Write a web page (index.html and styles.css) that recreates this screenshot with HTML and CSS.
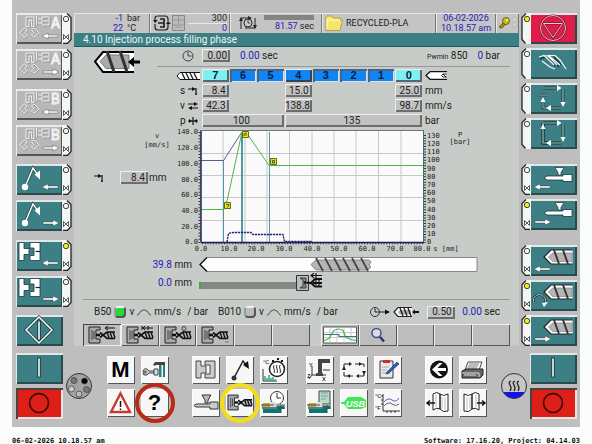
FILE: index.html
```html
<!DOCTYPE html>
<html lang="en">
<head>
<meta charset="utf-8">
<title>4.10 Injection process filling phase</title>
<link rel="stylesheet" href="styles.css">
</head>
<body>
<svg class="defs" aria-hidden="true">
  <symbol id="tab" viewBox="0 0 10 31"><path d="M0 0H6L9 4V27L6 31H0Z" fill="#f4f6f4"/><path d="M5 .5L9 4.5V26.500L5.500 30.500H1" fill="none" stroke="#222" stroke-width="1.300"/><circle class="lamp" cx="4" cy="6" r="2.700" stroke="#333" stroke-width=".9"/><path d="M1.500 21.500l5 5v-5l-5 5z" fill="none" stroke="#333" stroke-width=".8"/></symbol>
  <symbol id="tab-plain" viewBox="0 0 10 31"><path d="M0 0H6L9 4V27L6 31H0Z" fill="#f4f6f4"/><path d="M5 .5L9 4.500V26.500L5.500 30.500" fill="none" stroke="#222" stroke-width="1.300"/><circle class="lamp" cx="4" cy="6" r="2.700" stroke="#333" stroke-width=".9"/></symbol>
  <symbol id="arrow-l" viewBox="0 0 17 8"><path d="M0 4L6 1V3H16V5H6V7Z" fill="#fff" stroke="#333" stroke-width=".4"/></symbol>
  <symbol id="arrow-r" viewBox="0 0 17 8"><path d="M17 4L11 1V3H1V5H11V7Z" fill="#fff" stroke="#333" stroke-width=".4"/></symbol>
  <symbol id="robot" viewBox="0 0 47 31">
    <g fill="none" stroke="#8c8c8c" stroke-width=".8"><path d="M11 14V5H19V14H16V8H14V14ZM21 4V13M23 7h4M23 11h4M27 5h7v8h-7zM28 9h5M9 16L4 21L9 25.500L11.500 23L9.500 20.500L11.500 18ZM18 16L23 21L18 25.500L15.500 23L17.500 20.500L15.500 18Z"/></g>
    <g fill="none" stroke="#f4f4f4" stroke-width=".9"><path d="M10 13.500V4H18V13.500H15.500V7H13V13.500ZM20.500 3V12M22 6h4M22 10h4M26 4h7v8h-7zM27 8h5M8.500 15L3.500 20L8.500 24.500L11 22L9 19.500L11 17ZM18 15L23 20L18 24.500L15.500 22L17.500 19.500L15.500 17Z"/></g>
  </symbol>
  <symbol id="arm" viewBox="0 0 47 31"><path d="M9 23L17 4L22 11" fill="none" stroke="#1d3c40" stroke-width="2.600"/><path d="M9 23L17 4L22 11" fill="none" stroke="#fff" stroke-width="1.500"/><circle cx="9" cy="23" r="3.200" fill="#fff"/><path d="M24 15.500L18.500 10.500L24 6.500Z" fill="#fff"/></symbol>
  <symbol id="mold" viewBox="0 0 47 31"><path d="M3 2.500H8V8.500H13V14.500H8V20.500H3ZM14 2.500H24V20.500H14V15.500H18V8H14Z" fill="#fff" stroke="#173a3d" stroke-width=".8"/><path d="M19.500 11.500H24" stroke="#222" stroke-width="1.200"/></symbol>
  <symbol id="injector" viewBox="0 0 47 31"><path d="M25 3.500H34L31 8.500V11H28V8.500Z" fill="#fff" stroke="#17383b" stroke-width=".7"/><path d="M17 12H33V10.500H42V17.500H33V16H17L14 14Z" fill="#fff" stroke="#17383b" stroke-width=".8"/></symbol>
  <symbol id="screw" viewBox="0 0 30 16"><path d="M29.500 1H8L1 8L8 15H29.500" fill="#fff" stroke="#222" stroke-width="1.200"/><path d="M29 4H9.500L5.500 8L9.500 12.500H29Z" fill="#b4b4b4" stroke="#777" stroke-width=".6"/><path d="M11 1L16 15M20 1L25 15" stroke="#333" stroke-width="1.900"/></symbol>
  <symbol id="cycle" viewBox="0 0 47 31"><path d="M13 5H28M33 6V21M31 25H20" fill="none" stroke="#173a3d" stroke-width="3"/><path d="M13 5H28M33 6V21M31 25H20" fill="none" stroke="#9dbdbe" stroke-width="1.200"/><path d="M27 2L31.500 5L27 8ZM30.500 19L33 24L35.500 19ZM21 22L16 25L21 28ZM10.500 19L13 14L15.500 19Z" fill="#fff"/></symbol>
  <symbol id="moldscrew" viewBox="0 0 28 18"><path d="M1 1H12V4H8V13H12V17H1Z" fill="#aaa" stroke="#222"/><path d="M4 4V14M6 5V13" stroke="#444" fill="none"/><path d="M8 9H14" stroke="#111" stroke-width="2.500"/><path d="M12 6.500L15 9L12 11.500M27 6H19L15 9L19 12.500H27" fill="#bbb" stroke="#111" stroke-width="1.700"/><path d="M19 6l2 6M22 6l2 6M25 6l2 6" stroke="#111" stroke-width="1.400"/></symbol>
  <symbol id="clock" viewBox="0 0 12 12"><circle cx="6" cy="6" r="5" fill="none" stroke="#333" stroke-width=".9"/><path d="M6 2V6H9.500" fill="none" stroke="#333" stroke-width=".9"/></symbol>
  <symbol id="step" viewBox="0 0 10 10"><path d="M0 3H5M8 2V9M7 8H9" fill="none" stroke="#111" stroke-width="1.200"/><path d="M4 1L8 3L4 5Z" fill="#111"/></symbol>
  <symbol id="arc" viewBox="0 0 14 8"><path d="M0 7H1L4 3Q7 .5 10 3L13 7H14" fill="none" stroke="#444" stroke-width=".9"/></symbol>
  <symbol id="book" viewBox="0 0 28 28"><path d="M8 5Q12 2 15 5V20Q12 18 8 21ZM15 5Q18 8 23 5V22Q18 24 15 20Z" fill="#fff" stroke="#222"/><path d="M17 8V20M20 8V21M11 6V18" stroke="#aaa" stroke-width=".8"/></symbol>
  <symbol id="machine" viewBox="0 0 28 28"><path d="M2 15H25V20H2Z" fill="#8da598"/><path d="M3 14H10V18H3Z" fill="#d3a233"/><path d="M10 13H16V18H10Z" fill="#d9ded9"/><path d="M3 20H21V24H3ZM17 17H24V20H17Z" fill="#08767a"/><path d="M1 16H14M2 19H25M21 16V24" stroke="#35564a"/></symbol>
</svg>

<main class="machine">
  <div class="upper">
    <nav class="side left" aria-label="Axis keys">
      <div class="keys">
        <button class="key grey" aria-label="Core A in"><span class="face"><svg viewBox="0 0 47 31"><use href="#robot"/><text class="outline" x="35" y="15">A</text><use href="#arrow-l" x="26" y="19" width="17" height="8"/></svg></span><svg class="tab"><use href="#tab"/></svg></button>
        <button class="key grey" aria-label="Core A out"><span class="face"><svg viewBox="0 0 47 31"><use href="#robot"/><text class="outline" x="35" y="15">A</text><use href="#arrow-r" x="26" y="19" width="17" height="8"/></svg></span><svg class="tab"><use href="#tab"/></svg></button>
      </div>
      <div class="keys">
        <button class="key grey" aria-label="Core B in"><span class="face"><svg viewBox="0 0 47 31"><use href="#robot"/><text class="outline" x="35" y="15">B</text><use href="#arrow-l" x="26" y="19" width="17" height="8"/></svg></span><svg class="tab"><use href="#tab"/></svg></button>
        <button class="key grey" aria-label="Core B out"><span class="face"><svg viewBox="0 0 47 31"><use href="#robot"/><text class="outline" x="35" y="15">B</text><use href="#arrow-r" x="26" y="19" width="17" height="8"/></svg></span><svg class="tab"><use href="#tab"/></svg></button>
      </div>
      <div class="keys">
        <button class="key" aria-label="Ejector back"><span class="face"><svg viewBox="0 0 47 31"><use href="#arm"/><use href="#arrow-l" x="26" y="19" width="17" height="8"/></svg></span><svg class="tab"><use href="#tab"/></svg></button>
        <button class="key" aria-label="Ejector forward"><span class="face"><svg viewBox="0 0 47 31"><use href="#arm"/><use href="#arrow-r" x="26" y="19" width="17" height="8"/></svg></span><svg class="tab"><use href="#tab"/></svg></button>
      </div>
      <div class="keys">
        <button class="key on" aria-label="Mold open"><span class="face"><svg viewBox="0 0 47 31"><use href="#mold"/><use href="#arrow-l" x="26" y="19" width="17" height="8"/></svg></span><svg class="tab"><use href="#tab"/></svg></button>
        <button class="key" aria-label="Mold close"><span class="face"><svg viewBox="0 0 47 31"><use href="#mold"/><use href="#arrow-r" x="26" y="19" width="17" height="8"/></svg></span><svg class="tab"><use href="#tab"/></svg></button>
      </div>
      <div class="keys">
        <button class="key" aria-label="Cycle start"><span class="face"><svg viewBox="0 0 47 31"><path d="M23 2L36 15L23 28L10 15Z" fill="none" stroke="#173a3d" stroke-width="3"/><path d="M23 2L36 15L23 28L10 15Z" fill="none" stroke="#fff" stroke-width="1.500"/><path d="M21.500 6H24.500V25H21.500Z" fill="#c4d8d8" stroke="#14282a" stroke-width=".8"/></svg></span></button>
      </div>
    </nav>

    <section class="screen">
      <header class="status">
        <div class="cell readings"><span class="blue">-1</span><span>bar</span><span class="blue">22</span><span>°C</span></div>
        <div class="cell clampstate">
          <svg width="34" height="18" viewBox="0 0 34 18"><path d="M3 6V4Q3 2 6 2H13Q16 2 16 5V7M16 10V13Q16 16 13 16H6Q3 16 3 13V10" fill="none" stroke="#222" stroke-width="1.200"/><path d="M1 6H6L3 9ZM14 10H19L16 7Z" fill="#222"/><path d="M6 9H9M8 5H12V13H8M9 9H12" fill="none" stroke="#222" stroke-width="1.700"/><path d="M20.500 1.500H32.500V16.500H20.500Z" fill="#bbb" stroke="#888"/><path d="M26.500 2V11M21 6H32M21 11H32M23 13H30" stroke="#999"/></svg>
          <div class="slide"><span>300</span><span class="blue">0</span></div>
        </div>
        <div class="cell cycletime">
          <svg width="20" height="14" viewBox="0 0 20 14"><path d="M3 13V2H11M17 2V12H7" fill="none" stroke="#222"/><path d="M10 0L14 2L10 4ZM15 9L17 13L19 9ZM1 5L3 1L5 5Z" fill="#222"/><circle cx="10" cy="7" r="4" fill="#ccc" stroke="#222"/><path d="M10 4V7H12" fill="none" stroke="#222" stroke-width=".8"/></svg>
          <div class="timer"><div class="gauge"></div><div><span class="blue">81.57</span> sec</div></div>
        </div>
        <div class="cell file"><svg width="18" height="16" viewBox="0 0 18 16"><path d="M.5 3L2 1H7L8.500 3H15.500V5H17.500L15 15.500H1Z" fill="#f4e66a" stroke="#a7963f" stroke-width=".8"/><path d="M2 5H15M2 5V14" fill="none" stroke="#fff9c0"/></svg><span>RECYCLED-PLA</span></div>
        <div class="cell date blue"><span>06-02-2026</span><span>10.18.57 am</span></div>
        <div class="cell lock"><svg width="19" height="14" viewBox="0 0 19 14"><path d="M1 11L6 6L8 8L4 12H2Z" fill="#9a9300" stroke="#4f4b0c" stroke-width=".7"/><circle cx="8" cy="5" r="3.500" fill="#c9bf19" stroke="#4f4b0c" stroke-width=".8"/><circle cx="9" cy="4" r="1" fill="#eee"/><path d="M15 2h3v3h-3zM15 7h3v3h-3z" fill="#ddd" stroke="#aaa" stroke-width=".5"/></svg></div>
      </header>
      <h1>4.10 Injection process filling phase</h1>

      <div class="body">
        <div class="setup">
          <svg class="bigscrew" viewBox="0 0 48 24"><path d="M41 2H10L2 11.500L10 22H41" fill="#fff" stroke="#000" stroke-width="2"/><path d="M36 5H13L7 11.500L13 18.500H36Z" fill="#aaa" stroke="#777"/><path d="M14 1L21 22M27 1L34 22" stroke="#333" stroke-width="3"/><path d="M35 12L41 7V10.500H47V13.500H41V17Z" fill="#000"/></svg>
          <div class="profile">
            <div class="delay">
              <svg class="delayclock" width="12" height="12"><use href="#clock"/></svg>
              <button class="value">0.00</button>
              <span class="now"><span class="blue">0.00</span> sec</span>
              <span class="pressure"><span><small>Pwmin</small> 850</span><span><span class="blue">0</span> bar</span></span>
            </div>
            <div class="steps">
              <svg class="rowicon" width="24" height="8" viewBox="0 0 24 8"><path d="M24 .5H4L1 4L4 7.500H24" fill="#fff" stroke="#111"/><path d="M6 1l3 6M10 1l3 6M14 1l3 6M18 1l3 6" stroke="#222" stroke-width="1.400"/></svg>
              <button class="step end">7</button><button class="step">6</button><button class="step">5</button><button class="step active">4</button><button class="step">3</button><button class="step">2</button><button class="step">1</button><button class="step end">0</button>
              <svg class="unit" width="23" height="9" viewBox="0 0 23 9"><path d="M22 .7H5L1 4.500L5 8.300H22" fill="#fff" stroke="#111" stroke-width="1.200"/><path d="M22 3H18L16.500 4.500L18 6H22M18 3l3 3" fill="none" stroke="#222"/></svg>

              <span class="rowlabel">s <svg width="10" height="10"><use href="#step"/></svg></span>
              <button class="value c1">8.4</button><button class="value c4">15.0</button><button class="value c8">25.0</button><span class="unit">mm</span>

              <span class="rowlabel">v <svg width="10" height="10" viewBox="0 0 10 10"><path d="M0 3H8M2 7H10" stroke="#111"/><path d="M6 1L10 3L6 5ZM4 5L0 7L4 9Z" fill="#111"/></svg></span>
              <button class="value c1">42.3</button><button class="value c4">138.8</button><button class="value c8">98.7</button><span class="unit">mm/s</span>

              <span class="rowlabel">p <svg width="10" height="10" viewBox="0 0 10 10"><path d="M0 5H10M5 1V9" stroke="#111" stroke-width="1.200"/><path d="M1 3L4 5L1 7ZM9 3L6 5L9 7Z" fill="#111"/></svg></span>
              <button class="value wide3">100</button><button class="value wide5">135</button><span class="unit">bar</span>
            </div>
          </div>
        </div>

        <div class="graph">
          <div class="switchover">
            <p class="axisname">v<br>[mm/s]</p>
            <div class="switchvalue"><svg width="10" height="10"><use href="#step"/></svg><button class="value">8.4</button><span>mm</span></div>
          </div>
          <svg class="chart" viewBox="173 128 337 124" role="img" aria-label="Velocity and pressure profile">
            <path d="M201 131H423V242H201Z" fill="#f9faf9"/>
            <path d="M200 130.500H424" stroke="#6f7775"/>
            <path d="M223 131V242M245 131V242M267 131V242M289.500 131V242M312 131V242M334 131V242M356 131V242M378.500 131V242M401 131V242M201 153.500H423M201 175.500H423M201 197.500H423M201 220.500H423" stroke="#c6c8c6"/>
            <path d="M223.500 160V242M241.500 132V242M242.500 132V242M269.500 132V242" fill="none" stroke="#4f9aa2"/>
            <path d="M201 160.500H223.500L242 132" fill="none" stroke="#5c5c96"/>
            <path d="M201 209.500H224L227.500 199L242 132H246L269 165.500H423" fill="none" stroke="#4fb54a"/>
            <path d="M227 242L228.500 233.500L233 232.500H251L253 234.500H283L284.500 241.500H312" fill="none" stroke="#20207c" stroke-width="1.300" stroke-dasharray="2.200 .8"/>
            <path d="M201 131V242" stroke="#1c1c5c" stroke-width="1.500"/><path d="M201 242.500H424" stroke="#1c1c5c" stroke-width="1.500"/><path d="M423.500 131V242" stroke="#34717b"/>
            <path d="M199.500 132V243" stroke="#333" stroke-width="2" stroke-dasharray="1 2.140"/>
            <path d="M425 135V243" stroke="#333" stroke-width="2" stroke-dasharray="1 1.750"/>
            <path d="M202 243.500H424" stroke="#333" stroke-width="1.500" stroke-dasharray="1 1.750"/>
            <g fill="#e6e619" stroke="#595912" stroke-width=".9"><path d="M224.500 202.500h6v6h-6zM242.500 131.500h6v6h-6zM270.500 158.500h6v6h-6z"/></g>
            <path d="M226 204.500h3l-1.500 3M244 136v-2l2-1v3M272.500 160.500h2v2.500h-2z" fill="none" stroke="#333" stroke-width=".8"/>
            <g text-anchor="end"><text x="198" y="134">140.0</text><text x="198" y="150">120.0</text><text x="198" y="166">100.0</text><text x="198" y="182">80.0</text><text x="198" y="197">60.0</text><text x="198" y="213">40.0</text><text x="198" y="229">20.0</text><text x="198" y="244">0.0</text></g>
            <g><text x="427" y="138">130</text><text x="427" y="146">120</text><text x="427" y="154">110</text><text x="427" y="162">100</text><text x="427" y="171">90</text><text x="427" y="179">80</text><text x="427" y="187">70</text><text x="427" y="195">60</text><text x="427" y="203">50</text><text x="427" y="212">40</text><text x="427" y="220">30</text><text x="427" y="228">20</text><text x="427" y="236">10</text><text x="427" y="244">0</text></g>
            <g text-anchor="middle"><text x="201" y="251">0.0</text><text x="229" y="251">10.0</text><text x="256" y="251">20.0</text><text x="284" y="251">30.0</text><text x="312" y="251">40.0</text><text x="339" y="251">50.0</text><text x="367" y="251">60.0</text><text x="395" y="251">70.0</text><text x="422" y="251">80.0</text><text x="446" y="251">s [mm]</text><text x="460" y="137">P</text><text x="460" y="144">[bar]</text></g>
          </svg>
        </div>

        <div class="travel">
          <span><span class="blue">39.8</span> mm</span>
          <svg viewBox="0 0 279 15" role="img" aria-label="Screw position"><path d="M8 .5H278V14.500H8L1 7.500Z" fill="#fdfdfd" stroke="#888"/><path d="M8 .5L1 7.500L8 14.500" fill="none" stroke="#111" stroke-width="1.300"/><path d="M112 7.500L117 3H170L172 5L170 8L172 10L169 13H117Z" fill="#b5b5b5" stroke="#888"/><path d="M117 1L124 14M126 1L133 14M135 1L142 14M144 1L151 14M153 1L160 14M162 1L169 14" stroke="#444" stroke-width="1.700"/></svg>
          <span><span class="blue">0.0</span> mm</span>
          <svg viewBox="0 0 279 19" role="img" aria-label="Nozzle position"><path d="M0 9H97V16H0Z" fill="#868886"/><path d="M0 9H2V16H0Z" fill="#4ba04b"/><path d="M97.500 2.500H109.500V17.500H97.500Z" fill="#bbb" stroke="#333"/><path d="M101 5L104 7V13L101 15H107V12L105 10L107 8V5Z" fill="#888" stroke="#222" stroke-width=".8"/><path d="M105 9.500L112 10L116 6H123M112 10L116 13.500H123M114 10H123" fill="none" stroke="#111" stroke-width="1.800"/><path d="M112 2.500H123M115 0L112 2.500L115 5M117 0V12M120 5V14" fill="none" stroke="#111" stroke-width="1.100"/></svg>
        </div>

        <div class="tuning">
          <div class="zone"><span>B50</span><button class="led lit" aria-label="B50 on"></button><span>v</span><svg width="14" height="8"><use href="#arc"/></svg><span>mm/s</span><span class="slash">/ bar</span></div>
          <div class="zone"><span>B010</span><button class="led" aria-label="B010 off"></button><span>v</span><svg width="14" height="8"><use href="#arc"/></svg><span>mm/s</span><span class="slash">/ bar</span></div>
          <div class="hold"><svg width="50" height="12" viewBox="0 0 50 12"><circle cx="6" cy="6" r="4.500" fill="none" stroke="#333"/><path d="M6 2.500V6H10M11 6H18" fill="none" stroke="#222"/><path d="M16 3.500L21 6L16 8.500Z" fill="#111"/><path d="M43 1.500H29L25 6L29 10.500H43" fill="#fff" stroke="#222" stroke-width="1.200"/><path d="M42 4H31L29 6L31 8.500H42Z" fill="#aaa"/><path d="M31 2l3 8M35 2l3 8M39 2l3 8" stroke="#222" stroke-width="1.400"/><path d="M43 6L46 3.500V5H50V7H46V8.500Z" fill="#111"/></svg><button class="value">0.50</button><span><span class="blue">0.00</span> sec</span></div>
        </div>

        <div class="softkeys">
          <div class="group six">
            <button class="soft current" aria-label="Injection"><svg viewBox="0 0 28 18"><use href="#moldscrew"/><path d="M18 2H27M20 0L17 2L20 4" fill="none" stroke="#111"/></svg></button>
            <button class="soft" aria-label="Hold pressure"><svg viewBox="0 0 28 18"><use href="#moldscrew"/><path d="M16 2H27M19 0L17 2L19 4M22 0V4M16 0V4" fill="none" stroke="#111"/></svg></button>
            <button class="soft" aria-label="Plasticizing"><svg viewBox="0 0 28 18"><use href="#moldscrew"/><circle cx="20" cy="2.500" r="2" fill="none" stroke="#333" stroke-width=".9"/></svg></button>
            <button class="soft" aria-label="Decompression"><svg viewBox="0 0 28 18"><use href="#moldscrew"/><path d="M24 16H28" stroke="#777"/></svg></button>
            <button class="soft" aria-label="Free 5"></button>
            <button class="soft" aria-label="Free 6"></button>
          </div>
          <div class="group five">
            <button class="soft" aria-label="Graph"><svg class="curve" viewBox="0 0 34 17"><path d="M.5 .5H33.500V16.500H.5Z" fill="#fff" stroke="#555"/><path d="M7 1V16M14 1V16M21 1V16M28 1V16M1 6H33M1 11H33" stroke="#ccc"/><path d="M1 14L6 12L11 4Q16 1 20 4L23 11L28 13L33 14" fill="none" stroke="#43b944" stroke-width="1.200"/><path d="M1 8H16V10H33" fill="none" stroke="#447096" stroke-width="1.200"/></svg></button>
            <button class="soft" aria-label="Zoom"><svg viewBox="0 0 28 18"><circle cx="12.500" cy="7" r="4.500" fill="#d8dce8" stroke="#46527c" stroke-width="1.500"/><path d="M16 11L20 15.500" stroke="#28346e" stroke-width="2.500"/></svg></button>
            <button class="soft" aria-label="Free 9"></button>
            <button class="soft" aria-label="Free 10"></button>
            <button class="soft" aria-label="Free 11"></button>
          </div>
        </div>
      </div>
    </section>

    <nav class="side right" aria-label="Mode keys">
      <div class="keys">
        <button class="key stop on" aria-label="Stop"><span class="face"><svg viewBox="0 0 47 31"><g fill="none" stroke="#6e0c24" stroke-width="2"><circle cx="23" cy="15" r="12.500"/><path d="M13.500 10.500H32.500L23 24.500Z"/></g><g fill="none" stroke="#e9c7cb"><circle cx="23" cy="15" r="12.500"/><path d="M13.500 10.500H32.500L23 24.500Z"/></g></svg></span><svg class="tab"><use href="#tab-plain"/></svg></button>
        <button class="key" aria-label="Manual"><span class="face"><svg viewBox="0 0 47 31"><path d="M10 11L15 9L25 18M19 10L29 19M24 9L31 17" fill="none" stroke="#173a3d" stroke-width="1.500"/><path d="M9 9L14 7.500L24 17M14 7.500L18 8L27 17M18 7L30 17M18 7.500H25L30 12L36 21M12 13L20 19L25 21" fill="none" stroke="#f3f7f6" stroke-width="1.200"/></svg></span><svg class="tab"><use href="#tab-plain"/></svg></button>
        <button class="key" aria-label="Semi-automatic"><span class="face"><svg viewBox="0 0 47 31"><path d="M9 12H17M13 18V25H18" fill="none" stroke="#173a3d" stroke-width="2.400"/><path d="M9 12H17M13 18V25H18" fill="none" stroke="#9dbdbe"/><use href="#cycle"/></svg></span><svg class="tab"><use href="#tab-plain"/></svg></button>
        <button class="key" aria-label="Automatic"><span class="face"><svg viewBox="0 0 47 31"><path d="M13 5V25H18" fill="none" stroke="#173a3d" stroke-width="3"/><path d="M13 5V25H18M13 5H28M33 6V21M31 25H20" fill="none" stroke="#173a3d" stroke-width="3"/><path d="M13 5V25H18M13 5H28M33 6V21M31 25H20" fill="none" stroke="#9dbdbe" stroke-width="1.200"/><path d="M10.500 11L13 6L15.500 11ZM27 2L31.500 5L27 8ZM30.500 19L33 24L35.500 19ZM21 22L16 25L21 28Z" fill="#fff"/></svg></span><svg class="tab"><use href="#tab-plain"/></svg></button>
      </div>
      <div class="keys">
        <button class="key" aria-label="Unit forward"><span class="face"><svg viewBox="0 0 47 31"><use href="#injector"/><use href="#arrow-l" x="4" y="19" width="17" height="8"/></svg></span><svg class="tab"><use href="#tab"/></svg></button>
        <button class="key on" aria-label="Unit back"><span class="face"><svg viewBox="0 0 47 31"><use href="#injector"/><use href="#arrow-r" x="4" y="19" width="17" height="8"/></svg></span><svg class="tab"><use href="#tab"/></svg></button>
      </div>
      <div class="keys">
        <button class="key" aria-label="Inject"><span class="face"><svg viewBox="0 0 47 31"><use href="#screw" x="13" y="4" width="30" height="16"/><use href="#arrow-l" x="4" y="20" width="17" height="8"/></svg></span><svg class="tab"><use href="#tab"/></svg></button>
        <button class="key on" aria-label="Plasticize"><span class="face"><svg viewBox="0 0 47 31"><use href="#screw" x="13" y="4" width="30" height="16"/><path d="M4 23A6 6 0 1 1 15 23" fill="none" stroke="#173a3d" stroke-width="2.400"/><path d="M4 23A6 6 0 1 1 15 23" fill="none" stroke="#b7d0d0"/><path d="M12 23L18 22L14 27Z" fill="#fff"/></svg></span><svg class="tab"><use href="#tab"/></svg></button>
        <button class="key on" aria-label="Retract screw"><span class="face"><svg viewBox="0 0 47 31"><use href="#screw" x="13" y="4" width="30" height="16"/><use href="#arrow-r" x="4" y="20" width="17" height="8"/></svg></span><svg class="tab"><use href="#tab"/></svg></button>
      </div>
    </nav>
  </div>

  <div class="lower">
    <div class="power">
      <button class="key" aria-label="Motor on"><span class="face"><svg viewBox="0 0 47 31"><path d="M21.500 5H24.500V24H21.500Z" fill="#c4d4d4" stroke="#1a3033" stroke-width=".8"/></svg></span></button>
      <button class="key off" aria-label="Motor off"><span class="face"><svg viewBox="0 0 47 31"><circle cx="23" cy="15" r="9.500" fill="none" stroke="#2a0505" stroke-width="1.500"/></svg></span></button>
    </div>
    <svg class="round" viewBox="0 0 26 26" role="img" aria-label="Station wheel"><circle cx="13" cy="13" r="12.500" fill="#a4a4a4" stroke="#333"/><g stroke="#444" stroke-width=".8"><circle cx="8" cy="7.500" r="3" fill="#777"/><circle cx="18.500" cy="8" r="3" fill="#000"/><circle cx="5.500" cy="16" r="3" fill="#ccc"/><circle cx="20.500" cy="16.500" r="3" fill="#777"/><circle cx="13" cy="21" r="3" fill="#bbb"/></g></svg>
    <nav class="pads" aria-label="Pages">
      <div class="pad-group two">
        <button class="pad letter">M</button>
        <button class="pad" aria-label="Setup"><svg viewBox="0 0 28 28"><path d="M2 16Q2 12 6 13L8 15H15V17H8L6 19Q2 20 2 17H5V15Z" fill="#ccc" stroke="#222" stroke-width=".8"/><path d="M13 13H17V19H13Z" fill="#ddd" stroke="#444"/><path d="M14 6H24V9H15Q14 10 12 9Z" fill="#444"/><path d="M18 9H20.500V21H18ZM22 9H24V21H22Z" fill="#2c807b"/></svg></button>
        <button class="pad" aria-label="Alarms"><svg viewBox="0 0 28 28"><path d="M13.500 4.500L23 23H4Z" fill="#fff" stroke="#c43c2e" stroke-width="2.400"/><path d="M13.500 12V18M13.500 19.500V21" stroke="#111" stroke-width="1.500"/></svg></button>
        <button class="pad letter ring red">?</button>
      </div>
      <div class="pads-mid">
        <div class="pad-group three">
          <button class="pad" aria-label="Mold"><svg viewBox="0 0 28 28"><path d="M4 5H9V10H14V17H9V22H4ZM13 5H23V22H13V18H18V9H13Z" fill="#ccc" stroke="#444"/></svg></button>
          <button class="pad" aria-label="Ejector"><svg viewBox="0 0 28 28"><path d="M8 22L17 5L21 10" fill="none" stroke="#222" stroke-width="1.500"/><circle cx="8" cy="22" r="2.500" fill="#333"/><path d="M23 13L17 9L22 5Z" fill="#111"/></svg></button>
          <button class="pad" aria-label="Temperatures"><svg viewBox="0 0 28 28"><circle cx="17" cy="13" r="7.500" fill="#fff" stroke="#222" stroke-width="1.500"/><path d="M12 4h2v2h-2zM17 2h2v2h-2zM21 4h2v2h-2z" fill="#111"/><path d="M14 9q-1 2 0 4t0 4M17 9q-1 2 0 4t0 4M20 9q-1 2 0 4t0 4" fill="none" stroke="#333"/><path d="M3 13V25H17" fill="none" stroke="#333"/><path d="M5 25V20M7 25V22M9 25V19M11 25V22M13 25V21M15 25V23" stroke="#30a885" stroke-width="1.500"/><text x="3" y="8" class="tiny">°C</text></svg></button>
          <button class="pad" aria-label="Injection unit"><svg viewBox="0 0 28 28"><path d="M10 6H19L16 11V14H13V11Z" fill="#bbb" stroke="#333"/><path d="M4 15H18V13H26V20H18V18H4L2 16.500Z" fill="#ccc" stroke="#333"/></svg></button>
          <button class="pad ring yellow" aria-label="Injection process"><svg viewBox="0 0 28 28"><use href="#moldscrew" x="1" y="5" width="26" height="17"/></svg></button>
          <button class="pad" aria-label="Cycle times"><svg viewBox="0 0 28 28"><circle cx="17" cy="9" r="6.500" fill="#fff" stroke="#333"/><path d="M17 4V9H21" fill="none" stroke="#333"/><use href="#machine"/></svg></button>
        </div>
        <div class="pad-group three">
          <button class="pad" aria-label="Handling"><svg viewBox="0 0 28 28"><path d="M12 3H24V7H16V18H12Z" fill="#444"/><path d="M10 17H17V20H10Z" fill="#555"/><path d="M6 10V19L3 23M6 19H20M17 14H24" fill="none" stroke="#333"/><text x="3" y="11" class="tiny">Y</text><text x="1" y="22" class="tiny">Z</text><text x="16" y="25" class="tiny">X</text></svg></button>
          <button class="pad" aria-label="Sequence"><svg viewBox="0 0 28 28"><path d="M4 12V8H11M15 8H24V11M24 17V20H17M13 20H4V16" fill="none" stroke="#222"/><path d="M9 6L12 8L9 10ZM19 6L22 8L19 10ZM22 15L24 19L26 15ZM19 18L16 20L19 22ZM10 18L7 20L10 22ZM2 14L4 10L6 14Z" fill="#222"/></svg></button>
          <button class="pad" aria-label="Notes"><svg viewBox="0 0 28 28"><path d="M6 5H19V22H6Z" fill="#e9e9e9" stroke="#333"/><path d="M9 4H16V7H9Z" fill="#d62b2b"/><path d="M8 11H15M8 14H13M8 17H16" stroke="#aaa"/><path d="M23 6L13 16L12 18L15 17L25 8Z" fill="#2a62b4" stroke="#163a75" stroke-width=".7"/></svg></button>
          <button class="pad" aria-label="Machine"><svg viewBox="0 0 28 28"><path d="M13 2H24V15H13Z" fill="#bfd6cb" stroke="#445"/><path d="M15 4H22M15 7H22M15 10H20" stroke="#6a9"/><use href="#machine"/></svg></button>
          <button class="pad" aria-label="USB"><svg viewBox="0 0 28 28"><path d="M1 13H4L8 8H21L26 11V18L21 20H8L4 15H1Z" fill="#42e557"/><text x="6" y="18" class="usb">USB</text></svg></button>
          <button class="pad" aria-label="Trends"><svg viewBox="0 0 28 28"><path d="M9 5V22H26M7 7H9M7 11H9M7 15H9M13 22V24M17 22V24M21 22V24" fill="none" stroke="#333"/><path d="M10 13Q14 8 18 11T25 9" fill="none" stroke="#5c5cc0"/><path d="M10 17Q14 12 18 15T25 15" fill="none" stroke="#666"/><text x="1" y="9" class="tiny">°C</text><text x="1" y="21" class="tiny">°F</text></svg></button>
        </div>
      </div>
      <div class="pad-group two">
        <button class="pad" aria-label="Back"><svg viewBox="0 0 28 28"><circle cx="14" cy="13.500" r="9" fill="#111"/><path d="M7 13.500L14 7H17.500L12.500 12H21V15H12.500L17.500 20H14Z" fill="#fff"/></svg></button>
        <button class="pad" aria-label="Print"><svg viewBox="0 0 28 28"><path d="M9 6H23L20 14H6Z" fill="#fff" stroke="#444"/><path d="M10 8H20M9 10H19M8 12H18" stroke="#777"/><path d="M3 15L7 13H24V19L21 22H3Z" fill="#666" stroke="#222"/><path d="M3 17H20V21M5 19H17" fill="none" stroke="#ddd"/></svg></button>
        <button class="pad" aria-label="Previous page"><svg viewBox="0 0 28 28"><use href="#book"/><path d="M10 14H3M5 11.500L2 14L5 16.500" fill="none" stroke="#111" stroke-width="1.500"/></svg></button>
        <button class="pad" aria-label="Next page"><svg viewBox="0 0 28 28"><g transform="matrix(-1 0 0 1 28 0)"><use href="#book"/></g><path d="M18 14H25M23 11.500L26 14L23 16.500" fill="none" stroke="#111" stroke-width="1.500"/></svg></button>
      </div>
    </nav>
    <svg class="round" viewBox="0 0 26 26" role="img" aria-label="Oil heating"><circle cx="13" cy="13" r="12.500" fill="#c6c6c6" stroke="#333"/><path d="M2.500 19A12 12 0 0 0 23.500 19Z" fill="#1414e0"/><path d="M10 8Q7 9 9 12T9 18M14 8Q11 9 13 12T13 18M18 8Q15 9 17 12T17 18" fill="none" stroke="#222" stroke-width="1.300"/></svg>
    <div class="power">
      <button class="key" aria-label="Heating on"><span class="face"><svg viewBox="0 0 47 31"><path d="M21.500 5H24.500V24H21.500Z" fill="#c4d4d4" stroke="#1a3033" stroke-width=".8"/></svg></span></button>
      <button class="key off" aria-label="Heating off"><span class="face"><svg viewBox="0 0 47 31"><circle cx="23" cy="15" r="9.500" fill="none" stroke="#2a0505" stroke-width="1.500"/></svg></span></button>
    </div>
  </div>
</main>
<footer><span>06-02-2026 10.18.57 am</span><span>Software: 17.16.20, Project: 04.14.03</span></footer>
</body>
</html>
```
FILE: styles.css
```css
:root {
  --panel: #bebebe;
  --screen: #c8ccc8;
  --teal: #3c7f84;
  --blue: #2622b8;
  --ui: Roboto, "Liberation Sans", sans-serif;
  --mono: "DejaVu Sans Mono", monospace;
}

* { box-sizing: border-box; }

body {
  margin: 0;
  background: #fafdfb;
  color: #222;
  font: 10px/12px var(--ui);
}

button {
  display: block;
  margin: 0;
  padding: 0;
  border: 0;
  background: none;
  color: inherit;
  font: inherit;
}

svg { display: block; flex: none; }

.defs { position: absolute; width: 0; height: 0; }

.blue { color: var(--blue); }

.machine {
  margin: 0 12px;
  padding: 13px 3px 8px 4px;
  background: var(--panel);
}

.upper {
  display: grid;
  grid-template-columns: 56px minmax(0, 1fr) 56px;
  gap: 2px;
}

/* side keys */
.side {
  display: flex;
  flex-direction: column;
  justify-content: space-between;
}

.keys { display: grid; gap: 5px; }
.right .keys { gap: 4px; }

.key { display: flex; height: 31px; }
.right .key { flex-direction: row-reverse; }

.face {
  width: 47px;
  height: 31px;
  background: var(--teal);
  box-shadow: inset 1px 2px #e2e8e6, inset -2px -2px #2c4a4c;
}

.face svg { width: 47px; height: 31px; }
.grey .face { background: #b8b8b8; box-shadow: inset 1px 2px #ececec, inset -2px -2px #555; }
.stop .face { background: #e01c49; }
.off .face { background: #dd1f18; box-shadow: inset 2px 2px #4d4040, inset -2px -2px #e8e4e2; }

.tab { width: 10px; height: 31px; margin-left: -1px; fill: #f4f6f4; }
.on .tab { fill: #f2ee1a; }
.right .tab { margin: 0 -1px 0 0; transform: scaleX(-1); }

.outline {
  font: 14px var(--ui);
  fill: #b0b0b0;
  stroke: #f4f4f4;
  stroke-width: 1px;
}

/* screen */
.screen { background: var(--screen); }

.status {
  display: grid;
  grid-template-columns: 76px 80px 92px minmax(0, 1fr) 60px 23px;
  height: 20px;
  font-size: 9px;
  line-height: 10px;
}

.cell {
  display: flex;
  align-items: center;
  background: #c4c4c4;
  box-shadow: inset 1px 1px #e8e8e8, inset -1px 0 #777;
  white-space: nowrap;
}

.readings {
  display: grid;
  grid-template-columns: 49px auto;
  column-gap: 4px;
  align-content: center;
}

.readings .blue { text-align: right; }
.clampstate { gap: 2px; padding-left: 2px; }
.slide { display: grid; flex: 1; padding-right: 3px; text-align: right; }
.slide span:last-child { box-shadow: inset 0 1px #e8e8e8; }
.cycletime { justify-content: space-between; padding: 0 8px; }
.timer { display: grid; gap: 1px; width: 50px; text-align: right; }
.gauge { height: 5px; background: #858585; }
.file { gap: 3px; padding-left: 3px; }
.date { display: grid; align-content: center; justify-items: center; }
.lock { padding-left: 2px; }

h1 {
  margin: 0;
  padding-left: 9px;
  border-bottom: 1px solid #26585c;
  background: var(--teal);
  color: #f0f5f4;
  font: 10px/13px var(--ui);
}

.body { padding: 0 9px; }

.setup { display: grid; grid-template-columns: 74px minmax(0, 1fr); }
.bigscrew { width: 48px; height: 24px; margin: 3px 0 0 10px; }

.value {
  height: 13px;
  padding: 0 3px 0 0;
  background: #c2c2c2;
  box-shadow: inset 1px 1px #eee, inset -2px -2px #6d6d6d;
  line-height: 12px;
  text-align: right;
}

.delay {
  display: grid;
  grid-template-columns: 45px 28px minmax(0, 1fr) 87px;
  align-items: center;
  height: 20px;
  padding-bottom: 2px;
  border-bottom: 1px solid #959895;
}

.delayclock { margin-left: 25px; }
.now { padding-left: 10px; }
.pressure { display: flex; justify-content: space-between; padding: 0 10px 0 4px; white-space: nowrap; }
small { font: 7px/8px var(--ui); }

.steps {
  display: grid;
  grid-template-columns: 45px repeat(8, minmax(0, 1fr)) 87px;
  grid-auto-rows: 13px;
  row-gap: 2px;
  align-items: center;
  padding: 2px 0 1px;
}

.step {
  height: 13px;
  margin: 0 1px 0 0;
  background: #1285f5;
  box-shadow: inset 2px 2px #476484, inset -1px -1px #dde;
  color: #06204a;
  font: bold 11px/13px "Liberation Sans", sans-serif;
  text-align: center;
}

.step.active { box-shadow: inset 1px 1px #eee, inset -2px -2px #345; }
.step.end { background: #7ff0ee; box-shadow: inset 1px 1px #eee, inset -2px -2px #567; }

.steps .value { margin-right: 1px; }
.rowicon { margin-left: 19px; }
.rowlabel { display: flex; grid-column: 1; align-items: center; justify-content: space-between; padding: 0 4px 0 23px; }
.unit { grid-column: 10; margin-left: 2px; }
.c1 { grid-column: 2; }
.c4 { grid-column: 5; }
.c8 { grid-column: 9; }
.steps .wide3 { grid-column: 2 / span 3; text-align: center; }
.steps .wide5 { grid-column: 5 / span 5; text-align: center; }

.graph { display: grid; grid-template-columns: 90px minmax(0, 1fr); }
.chart { width: 100%; font: 7px var(--mono); fill: #222; }
.axisname { margin: 4px 0 21px 58px; font: 7px/9px var(--mono); text-align: center; }
.switchvalue { display: flex; align-items: center; padding-left: 11px; }
.switchvalue .value { width: 28px; margin: 0 1px 0 16px; }

.travel {
  display: grid;
  grid-template-columns: 109px minmax(0, 1fr);
  gap: 1px 7px;
  align-items: center;
  padding: 5px 32px 7px 0;
  border-bottom: 1px solid #959895;
  text-align: right;
}

.travel svg { width: 100%; }

.tuning {
  display: grid;
  grid-template-columns: 124px 151px minmax(0, 1fr);
  align-items: center;
  height: 24px;
  padding-left: 11px;
  white-space: nowrap;
}

.zone, .hold { display: flex; align-items: center; gap: 3px; }
.slash { margin-left: 3px; }
.hold { justify-content: space-between; padding-right: 10px; }
.hold .value { width: 28px; }

.led {
  flex: none;
  width: 12px;
  height: 12px;
  border: 2px solid #555;
  border-top-color: #eee;
  border-left-color: #999;
  border-radius: 4px;
  background: #bbb;
}

.led.lit { background: #22dd35; }

.softkeys { display: grid; grid-template-columns: 6fr 5fr; gap: 11px; }
.group { display: grid; }
.six { grid-template-columns: repeat(6, minmax(0, 1fr)); }
.five { grid-template-columns: repeat(5, minmax(0, 1fr)); }

.soft {
  display: flex;
  align-items: center;
  justify-content: center;
  height: 22px;
  background: #bdbdbd;
  box-shadow: inset 1px 1px #eee, inset -1px -1px #555;
}

.soft svg { width: 28px; height: 18px; }
.soft .curve { width: 34px; }
.soft.current { box-shadow: inset 1px 1px #444, inset -1px -1px #eee; }

/* lower panel */
.lower {
  display: grid;
  grid-template-columns: 47px 26px minmax(0, 1fr) 26px 47px;
  gap: 3px;
  align-items: center;
  margin-top: 7px;
}

.power { display: grid; gap: 4px; }
.round { width: 26px; height: 26px; }

.pads { display: flex; justify-content: center; gap: 23px; }
.pads-mid { display: flex; gap: 18px; }
.pad-group { display: grid; gap: 5px 6px; }
.two { grid-template-columns: repeat(2, 28px); }
.three { grid-template-columns: repeat(3, 28px); }

.pad {
  position: relative;
  height: 28px;
  background: #f7f7f7;
  box-shadow: inset 1px 1px #fff, inset -1px -1px #555;
}

.pad svg { width: 28px; height: 28px; }
.letter { color: #000; font: bold 22px/28px "Liberation Sans", sans-serif; text-align: center; }

.ring::after {
  position: absolute;
  inset: -6px;
  border: 4px solid;
  border-radius: 50%;
  content: "";
}

.red::after { border-color: #bb2a16; }
.yellow::after { border-color: #f3dc19; }

.tiny { font: 6px var(--ui); }
.usb { fill: #fff; font: italic bold 9px "Liberation Sans", sans-serif; }

footer {
  display: flex;
  justify-content: space-between;
  padding: 10px 12px 0;
  color: #111;
  font: bold 7px/9px var(--mono);
}
```
